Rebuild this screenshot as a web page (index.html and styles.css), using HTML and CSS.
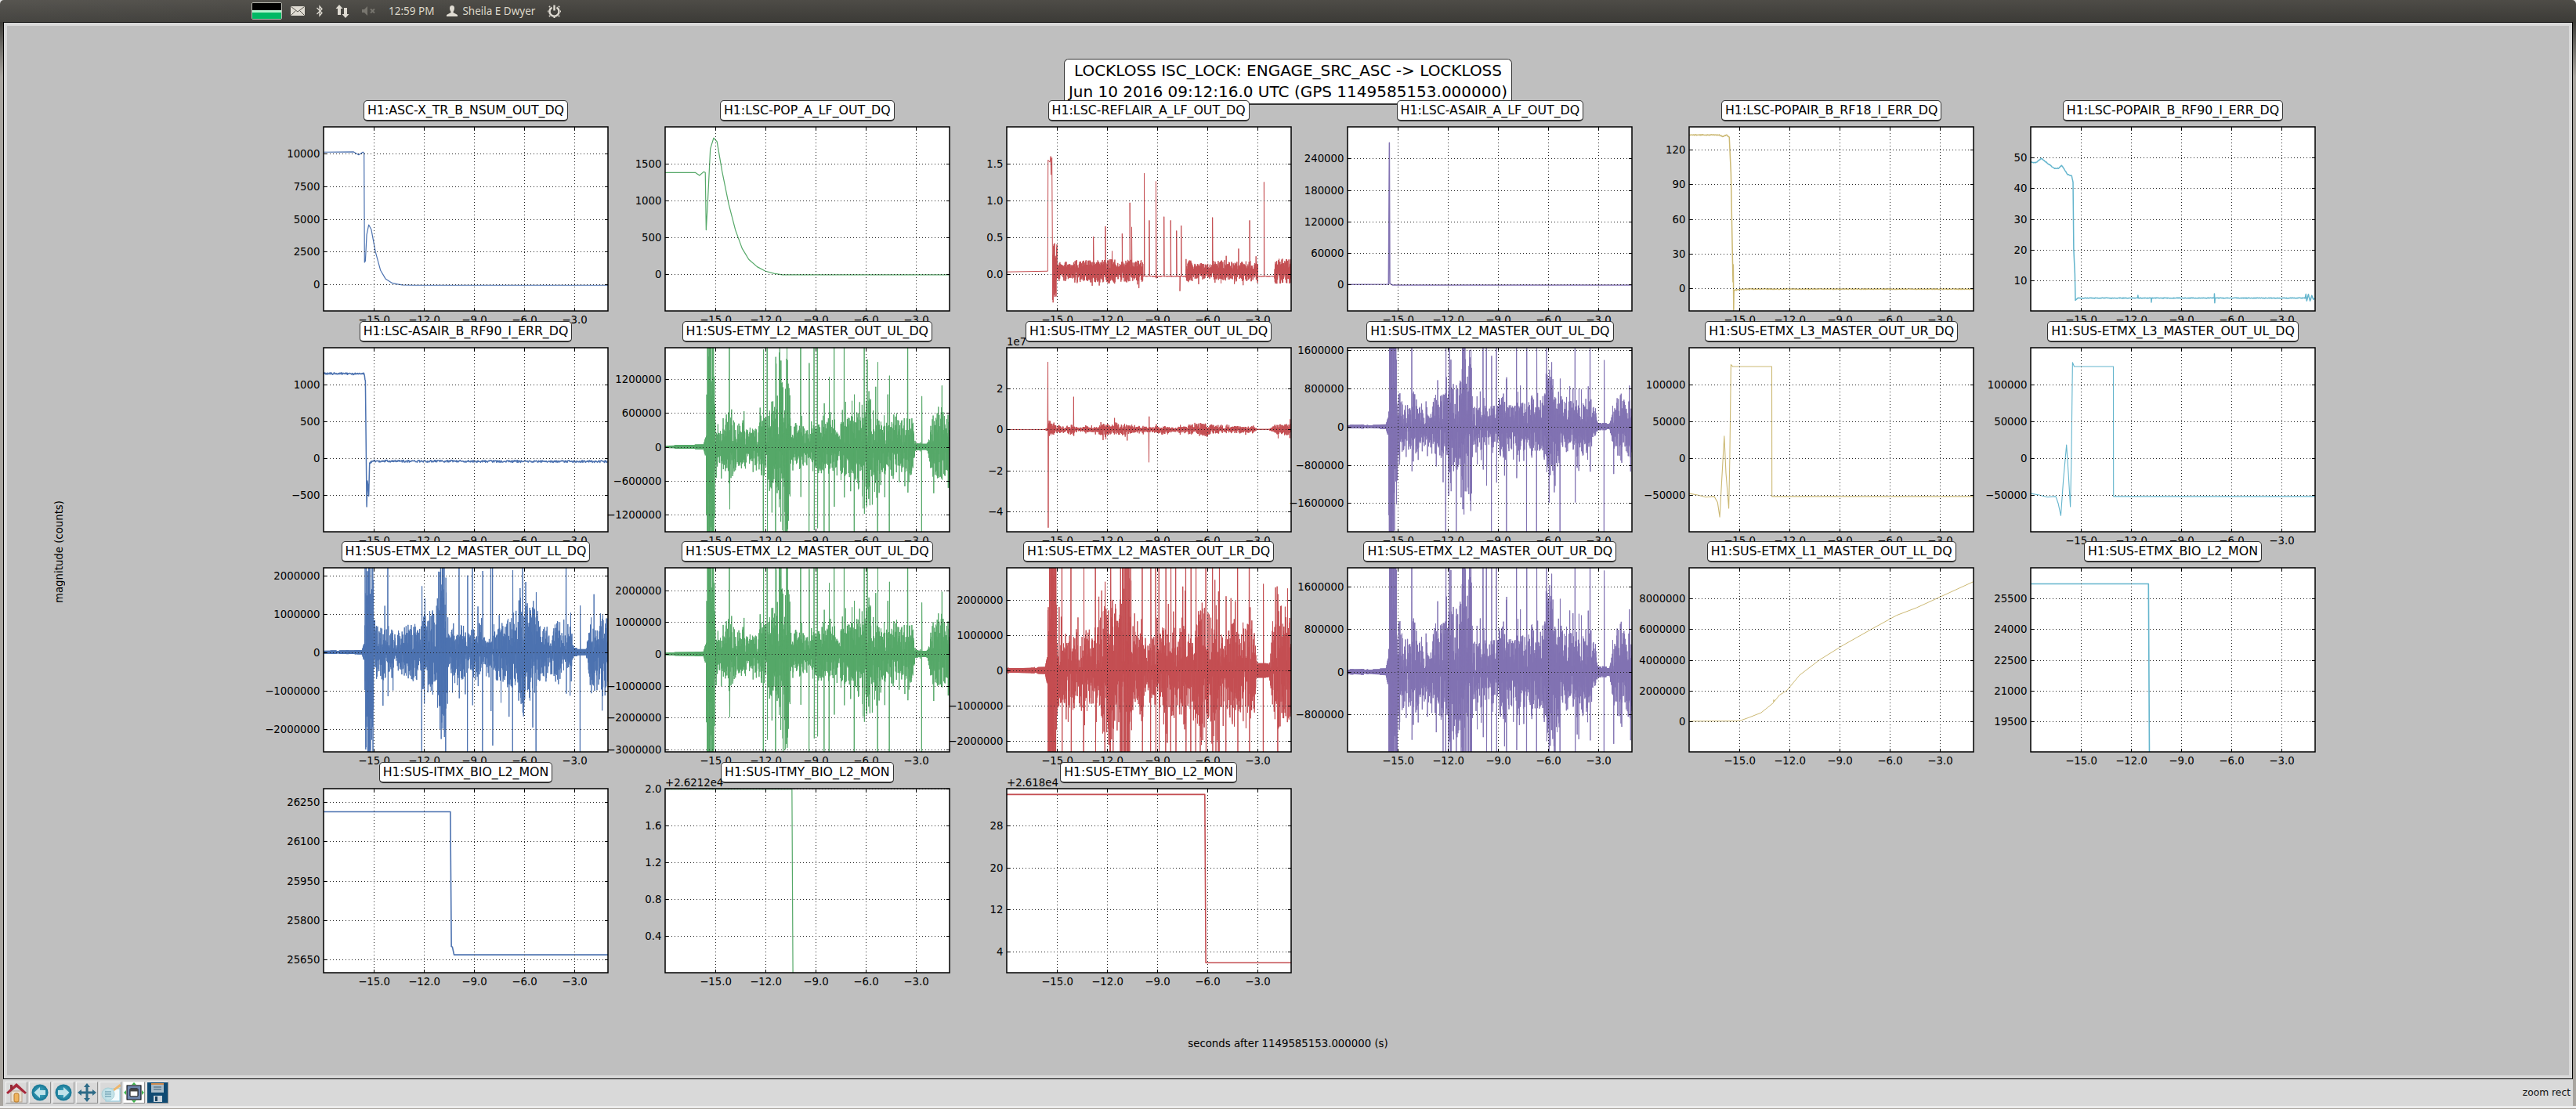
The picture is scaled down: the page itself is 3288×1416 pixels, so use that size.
FILE: index.html
```html
<!DOCTYPE html>
<html lang="en">
<head>
<meta charset="utf-8">
<title>LOCKLOSS ISC_LOCK</title>
<link rel="stylesheet" href="styles.css">
</head>
<body>
<header class="panel">
  <div class="flag"><span class="flag-black"></span><span class="flag-mint"></span><span class="flag-green"></span></div>
  <svg class="ind ind-mail" width="18" height="12" viewBox="0 0 18 12"><rect width="18" height="12" rx="1" fill="#dfdbd2"/><path d="M.5 .5 9 7l8.500-6.500M.5 11.500 6.500 5.500M17.500 11.500 11.500 5.500" fill="none" stroke="#55534c" stroke-width="1"/></svg>
  <svg class="ind ind-bt" width="8" height="16" viewBox="0 0 8 16"><path d="M.5 4 7 10.500 4 14V2l3 3.500L.5 12" fill="none" stroke="#dfdbd2" stroke-width="1.300"/></svg>
  <svg class="ind" width="18" height="17" viewBox="0 0 18 17"><path d="M5 0 9.500 5H7v8H3V5H.5zM13 17 8.500 12H11V4h4v8h2.500z" fill="#dfdbd2"/></svg>
  <svg class="ind" width="18" height="12" viewBox="0 0 18 12"><path d="M0 4h3l4-4v12L3 8H0z" fill="#78766f"/><path d="M11 3.500l5 5M16 3.500l-5 5" stroke="#78766f" stroke-width="1.800"/></svg>
  <span class="panel-text">12:59 PM</span>
  <svg class="ind ind-user" width="14" height="14" viewBox="0 0 14 14"><path d="M7 0c2 0 3 1.500 3 3.500S9 7 8.500 8v1L14 12v2H0v-2l5.500-3V8C5 7 4 5.500 4 3.500S5 0 7 0z" fill="#dfdbd2"/></svg>
  <span class="panel-text">Sheila E Dwyer</span>
  <svg class="ind" width="17" height="17" viewBox="0 0 17 17"><path d="M5.500 3.500a6 6 0 1 0 6 0" fill="none" stroke="#dfdbd2" stroke-width="2.400"/><path d="M8.500 .5v7" stroke="#dfdbd2" stroke-width="2.400"/><path d="M1 8.500H0M17 8.500h-1M3 14l-1 1M14 14l1 1M8.500 16v1M3 3 2 2M14 3l1-1" stroke="#dfdbd2" stroke-width="2"/></svg>
</header>

<div class="window">
  <main class="frame">
    <section class="figure">
      <h1 class="suptitle">LOCKLOSS ISC_LOCK: ENGAGE_SRC_ASC -&gt; LOCKLOSS<br>Jun 10 2016 09:12:16.0 UTC (GPS 1149585153.000000)</h1>
      <div class="figure-body">
        <div class="ylabel-col"><span class="ylabel">magnitude (counts)</span></div>
        <div class="plots" id="plots"></div>
      </div>
      <p class="xlabel">seconds after 1149585153.000000 (s)</p>
    </section>
  </main>
  <footer class="toolbar">
    <div class="tools">
      <button class="tool" aria-label="Home"><svg width="26" height="26" viewBox="0 0 26 26"><rect x="6" y="11" width="14" height="14" fill="#e9dfd0" stroke="#b9a68f"/><rect x="10" y="14" width="6" height="11" rx="2" fill="#efb35c" stroke="#b97c2c"/><path d="M0 13 13 1l13 12-2 2L13 6 2 15z" fill="#a8283a"/><rect x="5" y="3" width="3" height="6" fill="#8f2a36"/></svg></button>
      <button class="tool" aria-label="Back"><svg width="26" height="26" viewBox="0 0 26 26"><defs><radialGradient id="tb" cx=".5" cy=".5" r=".55"><stop offset="0" stop-color="#4fb4cc"/><stop offset="1" stop-color="#0f6f8e"/></radialGradient></defs><circle cx="13" cy="13" r="10.500" fill="url(#tb)"/><path d="M5.500 13 13 6v4h7v6h-7v4z" fill="#bfe3ea"/></svg></button>
      <button class="tool" aria-label="Forward"><svg width="26" height="26" viewBox="0 0 26 26"><circle cx="13" cy="13" r="10.500" fill="url(#tb)"/><path d="M20.500 13 13 6v4H6v6h7v4z" fill="#bfe3ea"/></svg></button>
      <button class="tool" aria-label="Pan"><svg width="26" height="26" viewBox="0 0 26 26"><path d="M13 1l4 5h-2.500v5.500H20V9l5 4-5 4v-2.500h-5.500V20H17l-4 5-4-5h2.500v-5.500H6V17l-5-4 5-4v2.500h5.500V6H9z" fill="#2e6b87"/></svg></button>
      <button class="tool" aria-label="Zoom"><svg width="26" height="26" viewBox="0 0 26 26"><rect x="7" y="8" width="18" height="16" fill="#f4fbfd" stroke="#8cc8dc"/><path d="M16 9 25 2l1 3-8 6z" fill="#efb66c"/><circle cx="10" cy="15" r="8" fill="#bcdfe6" fill-opacity=".85" stroke="#a9cdd4"/><path d="M6 12h8M6 15h8M6 18h8" stroke="#5a8ea3" stroke-width="1.200"/></svg></button>
      <button class="tool tool-white" aria-label="Configure"><svg width="26" height="26" viewBox="0 0 26 26"><rect x="4" y="4" width="18" height="18" fill="#6f86ad" stroke="#000"/><rect x="8" y="8" width="10" height="10" rx="1" fill="#fff" stroke="#000"/><rect x="8" y="8" width="10" height="3.500" fill="#444"/><path d="M13 0l3 3h-6zM13 26l-3-3h6zM0 13l3-3v6zM26 13l-3 3v-6z" fill="#3db54a"/></svg></button>
      <button class="tool tool-save" aria-label="Save"><svg width="26" height="26" viewBox="0 0 26 26"><rect width="26" height="26" rx="1" fill="#0f4a72"/><rect x="5" y="1" width="16" height="12" fill="#a9bcc8"/><rect x="5" y="1" width="16" height="2" fill="#d08a4c"/><path d="M8 6h10M8 9h10" stroke="#3c5e76" stroke-width="1.200"/><rect x="8" y="17" width="11" height="8" fill="#c7d2da"/><rect x="10" y="18" width="3" height="6" fill="#17405e"/></svg></button>
    </div>
    <span class="toolbar-mode">zoom rect</span>
  </footer>
</div>
<div class="foot"></div>
<script src="app.js"></script>
</body>
</html>
```

FILE: styles.css
```css
* { box-sizing: border-box; }
html, body { margin: 0; padding: 0; }
body {
  width: 3288px;
  height: 1416px;
  overflow: hidden;
  display: flex;
  flex-direction: column;
  background: #e4e4e4;
  font-family: "DejaVu Sans", sans-serif;
  color: #000;
}

/* desktop panel */
.panel {
  height: 28px;
  flex: none;
  display: flex;
  align-items: center;
  gap: 16px;
  padding-left: 321px;
  border-radius: 5px 5px 0 0;
  background:
    linear-gradient(90deg, rgba(255,255,255,.05), rgba(255,255,255,0) 700px),
    linear-gradient(#4e4c47, #3c3b37);
}
.panel-text {
  font-family: "Noto Sans", sans-serif;
  font-size: 13.500px;
  color: #dcd7c9;
  white-space: nowrap;
}
.flag {
  width: 39px;
  height: 22px;
  margin-right: -5px;
  display: flex;
  flex-direction: column;
  border: 1px solid #b8b8b0;
  border-radius: 2px;
  overflow: hidden;
}
.flag-black { height: 9px; background: #000; }
.flag-mint { height: 3px; background: #b6f3d0; }
.flag-green { flex: 1; background: #00b964; }
.ind { flex: none; display: block; }
.ind-mail { margin-right: -1px; }
.ind-user { margin-right: -10px; }

/* window around the matplotlib canvas */
.window {
  flex: 1;
  min-height: 0;
  display: flex;
  flex-direction: column;
  padding: 0 4px;
  background: linear-gradient(#3c3b37, #a9a59f 70px);
}
.frame {
  flex: 1;
  min-height: 0;
  border: 1px solid #000;
  padding: 4px;
  background: #d9d9d9;
}
.figure {
  height: 100%;
  display: flex;
  flex-direction: column;
  align-items: center;
  padding-top: 42px;
  background: #bfbfbf;
}
.suptitle {
  margin: 0 0 -6px;
  padding: 1px 5px 1px;
  font-size: 20px;
  font-weight: 400;
  line-height: 27px;
  text-align: center;
  white-space: nowrap;
  background: #fff;
  border: 1px solid #333;
  border-bottom-width: 2px;
  border-radius: 6px;
}
.figure-body {
  align-self: stretch;
  display: flex;
}
.ylabel-col {
  width: 404px;
  flex: none;
  display: flex;
  align-items: center;
  padding: 40px 0 0 59px;
}
.ylabel {
  writing-mode: vertical-rl;
  transform: rotate(180deg);
  font-size: 13.300px;
  line-height: 15px;
  white-space: nowrap;
}
.plots {
  display: grid;
  grid-template-columns: repeat(6, 363px);
  column-gap: 72.800px;
  row-gap: 12.500px;
  grid-auto-rows: 269px;
}
.cell {
  display: flex;
  flex-direction: column;
  align-items: center;
  gap: 7px;
}
.plot-title {
  height: 27px;
  padding: 0 4px;
  font-size: 15.800px;
  line-height: 24px;
  white-space: nowrap;
  background: #fff;
  border: 1px solid #333;
  border-bottom-width: 2px;
  border-radius: 5px;
}
.plot {
  display: block;
  flex: none;
  overflow: visible;
  background: #fff;
}
.tick-label {
  font-size: 13.300px;
  fill: #000;
}
.grid-line { stroke: #222; stroke-width: 1; stroke-dasharray: 1 3; fill: none; }
.axis-frame { fill: none; stroke: #000; stroke-width: 1.500; }
.tick-mark { stroke: #000; stroke-width: 1; }
.series { fill: none; stroke-linejoin: round; }
.series-0 { stroke: #4c72b0; }
.series-1 { stroke: #55a868; }
.series-2 { stroke: #c44e52; }
.series-3 { stroke: #8172b2; }
.series-4 { stroke: #ccb974; }
.series-5 { stroke: #64b5cd; }
.xlabel {
  margin: 83px 0 0;
  font-size: 13.300px;
  line-height: 15px;
  white-space: nowrap;
}

/* navigation toolbar */
.toolbar {
  height: 34px;
  flex: none;
  display: flex;
  align-items: center;
  justify-content: space-between;
  padding: 0 3px 0 3px;
  background: #d9d9d9;
}
.tools { display: flex; gap: 2px; }
.tool {
  width: 28px;
  height: 28px;
  padding: 0;
  display: flex;
  align-items: center;
  justify-content: center;
  background: #d9d9d9;
  border: 1px solid;
  border-color: #f2f2f2 #8f8f8f #8f8f8f #f2f2f2;
}
.tool-white { background: #fff; }
.tool-save { background: #0f4a72; }
.toolbar-mode {
  font-size: 12.300px;
  color: #111;
}
.foot {
  height: 4px;
  flex: none;
  background: #ececec;
  border-bottom: 1px solid #a9a59f;
}
```

FILE: app.js
```js
// Draws the strip-chart grid: each channel's trace comes from key points
// or from a seeded noise model of the seismic channels.
var W = 363, H = 235, NS = 'http://www.w3.org/2000/svg';
var XT = [-15, -12, -9, -6, -3];

function rng(seed) {
  var s = seed >>> 0;
  return function () {
    s = (s + 0x6D2B79F5) >>> 0;
    var t = s;
    t = Math.imul(t ^ (t >>> 15), t | 1);
    t ^= t + Math.imul(t ^ (t >>> 7), t | 61);
    return ((t ^ (t >>> 14)) >>> 0) / 4294967296;
  };
}

var ENV = [[-18,.04],[-15.7,.05],[-15.55,.25],[-15.5,6],[-15.1,6],[-15,1],[-14.6,.8],[-14.1,1.1],[-13.7,.6],[-13.2,.8],[-12.6,.9],[-12.2,1.2],[-11.8,1.3],[-11.3,1.5],[-11.1,2.6],[-10.6,2.6],[-10.5,.9],[-10,.9],[-9.5,.7],[-8.8,1],[-8.2,.7],[-7.5,.9],[-6.7,1],[-6.2,1.6],[-5.6,1.6],[-5,.9],[-4.3,.9],[-3.7,.9],[-3.2,.9],[-3.05,.1],[-2.3,.1],[-2.1,.9],[-1.5,1.2],[-1,1.3]];
var SPIKES = [-14.16,-12.13,-9.9,-9.4,-9.1,-8.5,-7.9,-6.7,-6.1,-5.3,-3.5,-2.67];

function interp(knots, t) {
  for (var i = 1; i < knots.length; i++) {
    if (t <= knots[i][0]) {
      var a = knots[i - 1], b = knots[i];
      return a[1] + (b[1] - a[1]) * (t - a[0]) / (b[0] - a[0]);
    }
  }
  return knots[knots.length - 1][1];
}

function seismic(seed, gain, burstCap, spikes) {
  var r = rng(seed), pts = [], mod = 1, sign = 1;
  for (var t = -18; t <= -1; t += 0.012) {
    if (r() < 0.05) mod = 0.7 + 0.6 * r();
    sign = -sign;
    var e = Math.min(interp(ENV, t), burstCap);
    var a = e * gain;
    var u = r();
    var shape = e > 0.2 ? Math.pow(u, .9) * .85 + (r() < 0.12 ? 0.7 * r() : 0) : 1;
    pts.push([t, sign * a * shape * mod * 1.3]);
  }
  spikes.forEach(function (sp, i) {
    var k = Math.round((sp + 18) / 0.012);
    var dir = (i + seed) % 2 ? 1 : -1;
    pts[k] = [sp, dir * gain * 8];
    pts[k + 1] = [sp + 0.012, -dir * gain * (1.5 + 2 * r())];
  });
  return pts;
}

function jitter(seed, pts, amp) {
  var r = rng(seed), out = [];
  for (var i = 1; i < pts.length; i++) {
    var a = pts[i - 1], b = pts[i], n = Math.max(1, Math.round((b[0] - a[0]) / 0.03));
    for (var j = 0; j < n; j++) {
      var f = j / n;
      out.push([a[0] + (b[0] - a[0]) * f, a[1] + (b[1] - a[1]) * f + (r() - 0.5) * amp]);
    }
  }
  return out;
}

function reflair() {
  var r = rng(31), pts = [[-18, .03], [-15.55, .04], [-15.53, 1.55], [-15.42, 1.52], [-15.37, 1.6], [-15.35, 1.35], [-15.3, 1.58]];
  var ups = [[-12.82,.51],[-12.1,.65],[-11.1,.55],[-10.64,.97],[-10.53,.64],[-9.78,1.37],[-9.48,.73],[-9.08,1.26],[-8.6,.78],[-8.2,.73],[-7.85,.59],[-7.57,.66],[-5.7,.77],[-3.48,.73],[-2.62,1.25],[-10.1,-.19],[-7.65,-.23]];
  var sign = 1, mod = 1;
  for (var t = -15.25; t <= -1; t += 0.01) {
    var quiet = (t > -9.86 && t < -9.1) || (t > -8.5 && t < -7.3) || (t > -3 && t < -2);
    var semi = (t > -9.05 && t < -8.5);
    sign = -sign;
    if (r() < 0.04) mod = 0.75 + 0.6 * r();
    var v;
    if (quiet || semi) {
      v = -0.03 + (r() - .5) * .012;
    } else {
      var amp = t < -15 ? .45 : .13;
      v = .04 + sign * amp * Math.pow(r(), .8) * mod;
      if (r() < 0.04) v = .04 + (sign > 0 ? .34 : .2) * sign * r();
    }
    pts.push([t, v]);
  }
  ups.forEach(function (u) {
    var k = pts.findIndex(function (p) { return p[0] >= u[0]; });
    if (k > 0) pts[k] = u;
  });
  return pts;
}

var PLOTS = [
  { t: 'H1:ASC-X_TR_B_NSUM_OUT_DQ', y: [-2000, 12000], l: ['10000','7500','5000','2500','0'], w: 1.2,
    p: [[-18,10080],[-16.2,10100],[-15.9,9870],[-15.65,10080],[-15.58,10000],[-15.55,1700],[-15.5,1800],[-15.42,3800],[-15.3,4550],[-15.15,4200],[-14.9,2500],[-14.6,1100],[-14.3,450],[-13.9,120],[-13.3,-30],[-12.5,-50],[-1,-50]] },
  { t: 'H1:LSC-POP_A_LF_OUT_DQ', y: [-500, 2000], l: ['1500','1000','500','0'], w: 1.2,
    p: [[-18,1380],[-16.2,1380],[-15.95,1340],[-15.7,1390],[-15.6,1380],[-15.55,600],[-15.45,1000],[-15.3,1700],[-15.1,1850],[-14.9,1800],[-14.6,1400],[-14.2,950],[-13.8,600],[-13.4,350],[-13,200],[-12.5,100],[-12,40],[-11.5,10],[-11,-10],[-1,-10]] },
  { t: 'H1:LSC-REFLAIR_A_LF_OUT_DQ', y: [-0.5, 2], l: ['1.5','1.0','0.5','0.0'], w: 1, gen: reflair },
  { t: 'H1:LSC-ASAIR_A_LF_OUT_DQ', y: [-50000, 300000], l: ['240000','180000','120000','60000','0'], w: 1.5,
    p: [[-18,400],[-15.55,800],[-15.5,270000],[-15.47,2000],[-15.3,-800],[-1,-800]] },
  { t: 'H1:LSC-POPAIR_B_RF18_I_ERR_DQ', y: [-20, 140], l: ['120','90','60','30','0'], w: 1.5, jit: 0.7,
    p: [[-18,133],[-16.2,133],[-16,131.5],[-15.75,133],[-15.6,131],[-15.5,100],[-15.38,5],[-15.36,20],[-15.34,-20],[-15.32,-2],[-14.8,-1],[-1,-1]] },
  { t: 'H1:LSC-POPAIR_B_RF90_I_ERR_DQ', y: [0, 60], l: ['50','40','30','20','10'], w: 1.5, jit: 0.2,
    p: [[-18,48.5],[-17.7,48.3],[-17.36,49.7],[-16.6,46.5],[-16.33,46.5],[-16.15,47.5],[-15.8,44.5],[-15.55,44],[-15.47,42],[-15.43,20],[-15.36,12],[-15.33,3.5],[-15.2,4.2],[-11.6,4.2],[-11.59,5],[-11.57,4.2],[-10.8,4.2],[-10.79,2.8],[-10.77,4.2],[-7.03,4.2],[-7.02,5.6],[-7,2.6],[-6.98,4.2],[-1.6,4.2],[-1.55,5.5],[-1.5,3.3],[-1.4,5.4],[-1.3,3.2],[-1.2,5],[-1.1,3.8],[-1,4.2]] },

  { t: 'H1:LSC-ASAIR_B_RF90_I_ERR_DQ', y: [-1000, 1500], l: ['1000','500','0','\u2212500'], w: 1.5, jit: 28,
    p: [[-18,1150],[-15.58,1145],[-15.5,1050],[-15.42,-650],[-15.38,-300],[-15.3,-500],[-15.25,-70],[-15.1,-40],[-1,-45]] },
  { t: 'H1:SUS-ETMY_L2_MASTER_OUT_UL_DQ', y: [-1.5e6, 1.75e6], l: ['1200000','600000','0','\u2212600000','\u22121200000'], w: 1,
    gen: function () { return seismic(7, 5e5, 6, SPIKES.concat([-11.9,-11.4,-8.9,-8.2,-7.3,-4.6])); } },
  { t: 'H1:SUS-ITMY_L2_MASTER_OUT_UL_DQ', y: [-5, 4], l: ['2','0','\u22122','\u22124'], w: 1, off: '1e7',
    gen: function () {
      var s = seismic(12, .2, 1.3, [-9.5, -14]);
      s.splice(203, 0, [-15.56, .05], [-15.54, 3.3], [-15.52, -4.8], [-15.5, .1]);
      return s;
    } },
  { t: 'H1:SUS-ITMX_L2_MASTER_OUT_UL_DQ', y: [-2.2e6, 1.65e6], l: ['1600000','800000','0','\u2212800000','\u22121600000'], w: 1,
    gen: function () { return seismic(9, 5.5e5, 6, SPIKES.concat([-11.9,-11.5,-9.7,-7.3,-4.4])); } },
  { t: 'H1:SUS-ETMX_L3_MASTER_OUT_UR_DQ', y: [-100000, 150000], l: ['100000','50000','0','\u221250000'], w: 1.1,
    p: [[-18,-48000],[-17.5,-50000],[-17,-53000],[-16.5,-52000],[-16.3,-60000],[-16.17,-80000],[-16.05,-30000],[-15.9,30000],[-15.8,-20000],[-15.63,-68000],[-15.57,0],[-15.5,127000],[-15.4,124500],[-13.06,124500],[-13.05,-52000],[-1,-52000]] },
  { t: 'H1:SUS-ETMX_L3_MASTER_OUT_UL_DQ', y: [-100000, 150000], l: ['100000','50000','0','\u221250000'], w: 1.1,
    p: [[-18,-48000],[-17.5,-50000],[-17,-53000],[-16.5,-52000],[-16.35,-62000],[-16.2,-78000],[-16.05,-30000],[-15.86,18000],[-15.75,-20000],[-15.63,-66000],[-15.57,0],[-15.5,130000],[-15.4,124500],[-13.06,124500],[-13.05,-52000],[-1,-52000]] },

  { t: 'H1:SUS-ETMX_L2_MASTER_OUT_LL_DQ', y: [-2.6e6, 2.2e6], l: ['2000000','1000000','0','\u22121000000','\u22122000000'], w: 1,
    gen: function () { return seismic(5, 7e5, 6, SPIKES.concat([-11,-10.7,-8])); } },
  { t: 'H1:SUS-ETMX_L2_MASTER_OUT_UL_DQ', y: [-3.07e6, 2.7e6], l: ['2000000','1000000','0','\u22121000000','\u22122000000','\u22123000000'], w: 1,
    gen: function () { return seismic(7, 9e5, 6, SPIKES.concat([-11.9,-11.4,-8.9,-8.2,-7.3,-4.6])); } },
  { t: 'H1:SUS-ETMX_L2_MASTER_OUT_LR_DQ', y: [-2.3e6, 2.9e6], l: ['2000000','1000000','0','\u22121000000','\u22122000000'], w: 1,
    gen: function () { return seismic(15, 1.25e6, 6, SPIKES.concat([-14.7,-13.4,-12.7,-11.8,-8.9,-8.2,-7.3,-7,-5.7,-4.9,-4.2,-1.8])); } },
  { t: 'H1:SUS-ETMX_L2_MASTER_OUT_UR_DQ', y: [-1.5e6, 1.95e6], l: ['1600000','800000','0','\u2212800000'], w: 1,
    gen: function () { return seismic(9, 7.5e5, 6, SPIKES.concat([-11.9,-11.5,-9.7,-7.3,-4.4])); } },
  { t: 'H1:SUS-ETMX_L1_MASTER_OUT_LL_DQ', y: [-2e6, 1e7], l: ['8000000','6000000','4000000','2000000','0'], w: 1,
    p: [[-18,0],[-15.2,10000],[-14.9,50000],[-14.4,250000],[-13.7,550000],[-13.3,900000],[-12.96,1200000],[-12.94,1400000],[-12.92,1270000],[-12.6,1700000],[-12.16,2000000],[-11.4,3000000],[-10.2,4000000],[-8.8,4950000],[-7.1,6000000],[-5.6,6900000],[-4.4,7400000],[-3.2,8000000],[-1,9100000]] },
  { t: 'H1:SUS-ETMX_BIO_L2_MON', y: [18000, 27000], l: ['25500','24000','22500','21000','19500'], w: 1.6,
    p: [[-18,26215],[-10.96,26215],[-10.9,17000]] },

  { t: 'H1:SUS-ITMX_BIO_L2_MON', y: [25600, 26300], l: ['26250','26100','25950','25800','25650'], w: 1.6,
    p: [[-18,26212],[-10.42,26212],[-10.36,25700],[-10.3,25698],[-10.2,25668],[-1,25668]] },
  { t: 'H1:SUS-ITMY_BIO_L2_MON', y: [0, 2], l: ['2.0','1.6','1.2','0.8','0.4'], w: 1.2, off: '+2.6212e4',
    p: [[-18,1.995],[-10.42,1.995],[-10.36,-0.1]] },
  { t: 'H1:SUS-ETMY_BIO_L2_MON', y: [0, 35], l: ['28','20','12','4'], w: 1.6, off: '+2.618e4',
    p: [[-18,33.9],[-6.16,33.9],[-6.1,1.9],[-1,1.9]] }
];

function el(name, attrs, parent) {
  var e = document.createElementNS(NS, name);
  for (var k in attrs) e.setAttribute(k, attrs[k]);
  if (parent) parent.appendChild(e);
  return e;
}

function build(spec, idx) {
  var cell = document.createElement('div');
  cell.className = 'cell';
  var title = document.createElement('div');
  title.className = 'plot-title';
  title.textContent = spec.t;
  cell.appendChild(title);

  var svg = el('svg', { 'class': 'plot', width: W, height: H, viewBox: '0 0 ' + W + ' ' + H });
  var lo = spec.y[0], hi = spec.y[1];
  var X = function (t) { return (t + 18) * W / 17; };
  var Y = function (v) { return H * (hi - v) / (hi - lo); };

  var pts = spec.gen ? spec.gen() : spec.p;
  if (spec.jit) pts = jitter(idx + 40, pts, spec.jit);
  var inner = el('svg', { x: 0, y: 0, width: W, height: H }, svg);
  el('polyline', {
    'class': 'series series-' + (idx % 6),
    'stroke-width': spec.w,
    points: pts.map(function (p) { return X(p[0]).toFixed(2) + ',' + Y(p[1]).toFixed(2); }).join(' ')
  }, inner);

  XT.forEach(function (t) {
    var x = Math.round(X(t)) + 0.5;
    el('line', { 'class': 'grid-line', x1: x, x2: x, y1: 0, y2: H }, svg);
    el('line', { 'class': 'tick-mark', x1: x, x2: x, y1: 0, y2: 4 }, svg);
    el('line', { 'class': 'tick-mark', x1: x, x2: x, y1: H, y2: H - 4 }, svg);
    var s = el('text', { 'class': 'tick-label', x: x, y: H + 16, 'text-anchor': 'middle' }, svg);
    s.textContent = '\u2212' + Math.abs(t).toFixed(1);
  });
  spec.l.forEach(function (lab) {
    var v = parseFloat(lab.replace('\u2212', '-'));
    var y = Math.round(Y(v)) + 0.5;
    el('line', { 'class': 'grid-line', x1: 0, x2: W, y1: y, y2: y }, svg);
    el('line', { 'class': 'tick-mark', x1: 0, x2: 4, y1: y, y2: y }, svg);
    el('line', { 'class': 'tick-mark', x1: W, x2: W - 4, y1: y, y2: y }, svg);
    var s = el('text', { 'class': 'tick-label', x: -4.5, y: y + 4.8, 'text-anchor': 'end' }, svg);
    s.textContent = lab;
  });
  el('rect', { 'class': 'axis-frame', x: 0, y: 0, width: W, height: H }, svg);
  if (spec.off) {
    var o = el('text', { 'class': 'tick-label', x: 0, y: -3, 'text-anchor': 'start' }, svg);
    o.textContent = spec.off;
  }
  cell.appendChild(svg);
  return cell;
}

var host = document.getElementById('plots');
PLOTS.forEach(function (spec, i) { host.appendChild(build(spec, i)); });
```
